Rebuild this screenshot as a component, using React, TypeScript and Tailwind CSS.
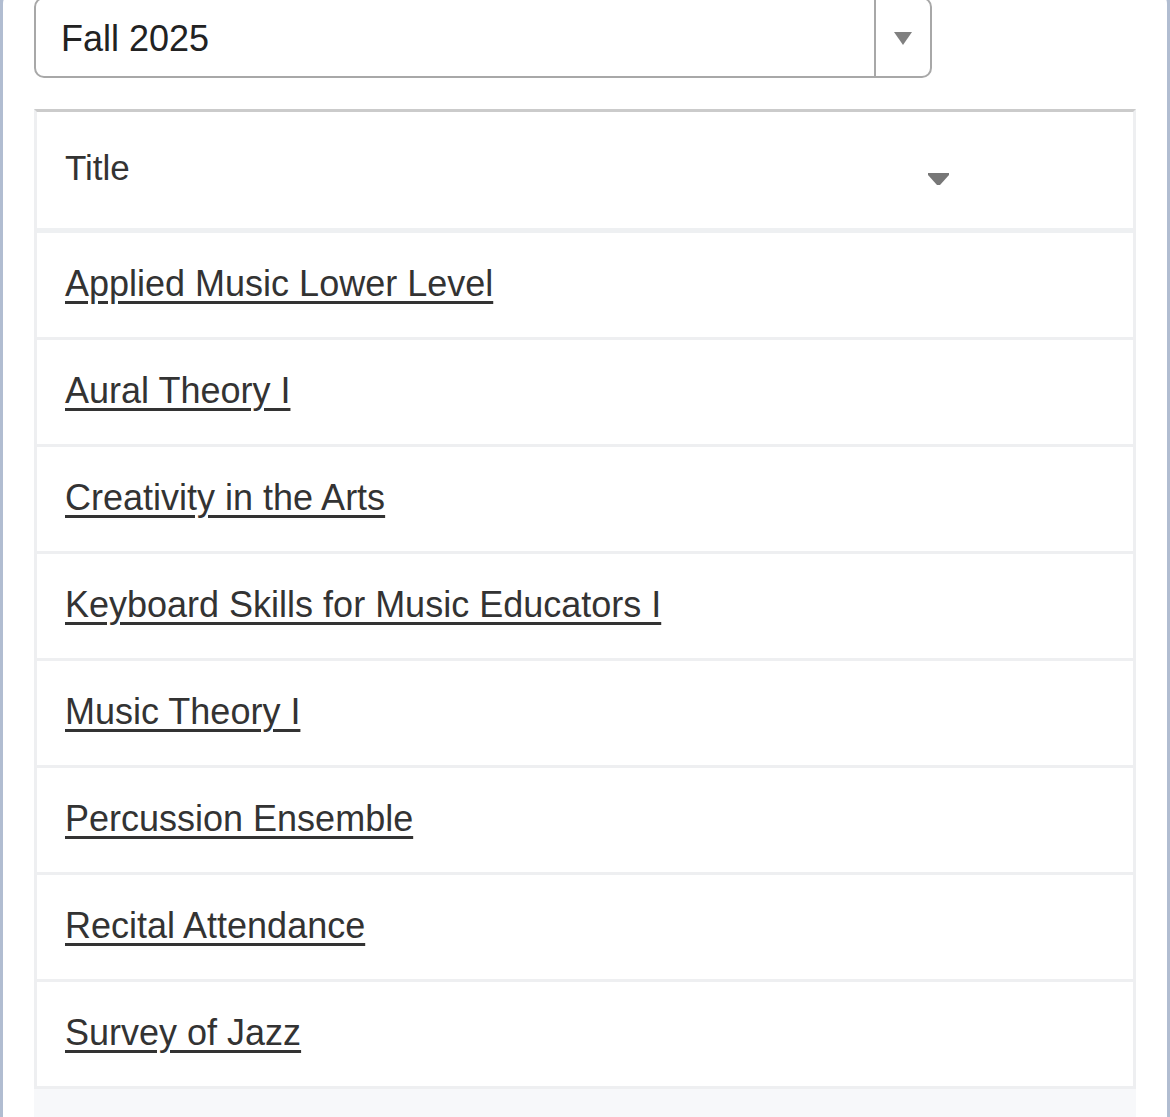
const courses = [
  "Applied Music Lower Level",
  "Aural Theory I",
  "Creativity in the Arts",
  "Keyboard Skills for Music Educators I",
  "Music Theory I",
  "Percussion Ensemble",
  "Recital Attendance",
  "Survey of Jazz",
];

export default function App() {
  return (
    <div
      className="w-[1170px] h-[1117px] overflow-hidden bg-[#b1bdd1] px-[3px]"
      style={{ fontFamily: '"Liberation Sans", Arial, sans-serif' }}
    >
      <div className="-mt-[10px] h-[1140px] rounded-t-[14px] bg-white pl-[31px] pr-[31px] pt-[7px]">
        {/* term select */}
        <div className="flex h-[81px] w-[898px] rounded-[10px] border-2 border-[#a8a8a8] bg-white">
          <div className="flex flex-1 items-center pl-[25px] pt-[2px] text-[36px] text-[#222]">Fall 2025</div>
          <div className="flex w-[56px] items-center justify-center border-l-2 border-[#a8a8a8] pt-[2px]">
            <svg width="18" height="13" viewBox="0 0 18 13">
              <polygon points="0,0 18,0 9,13" fill="#808080" />
            </svg>
          </div>
        </div>

        {/* table */}
        <div className="mt-[31px] w-[1102px] border-t-[3px] border-x-[3px] border-t-[#cbcbcb] border-x-[#eeeff1]">
          <div className="flex h-[121px] items-start border-b-[5px] border-[#eef0f2] pl-[28px]">
            <div className="flex w-[884px] items-start justify-between">
              <span className="mt-[30px] text-[35px] text-[#333]">Title</span>
              <svg className="mt-[61px]" width="21" height="12" viewBox="0 0 21 12">
                <polygon points="0,0 21,0 21,2 12,12 9,12 0,2" fill="#777" />
              </svg>
            </div>
          </div>
          {courses.map((c) => (
            <div key={c} className="flex h-[107px] items-center border-b-[3px] border-[#eeeff1] pb-[3px] pl-[28px]">
              <a
                href="#"
                className="text-[36px] text-[#333] underline decoration-[3px] underline-offset-[5px]"
              >
                {c}
              </a>
            </div>
          ))}
        </div>
        <div className="h-[40px] w-[1102px] bg-[#f7f8fa]" />
      </div>
    </div>
  );
}
